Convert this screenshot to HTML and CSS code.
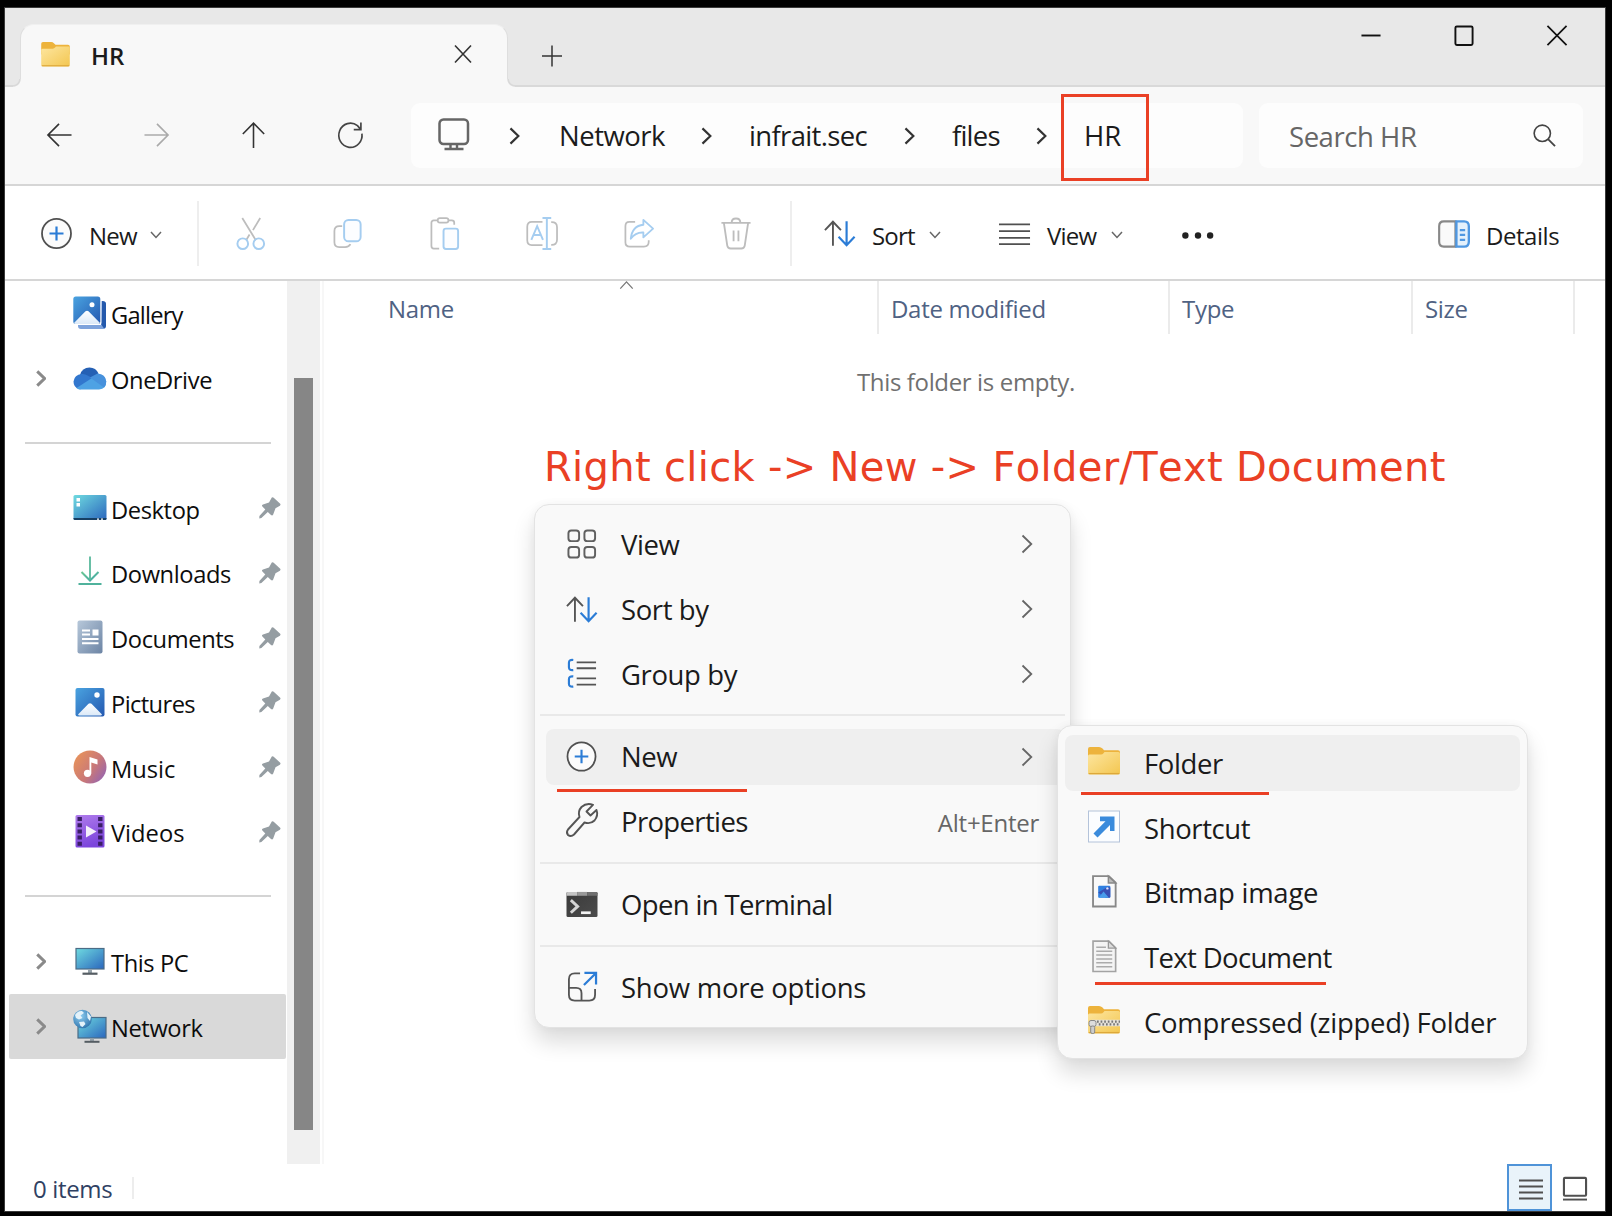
FILE: index.html
```html
<!DOCTYPE html>
<html lang="en">
<head>
<meta charset="utf-8">
<title>HR</title>
<link rel="stylesheet" href="styles.css">
</head>
<body>
<svg class="defs" width="0" height="0" aria-hidden="true">
  <defs>
    <linearGradient id="gFolder" x1="0" y1="0" x2="1" y2="1"><stop offset="0" stop-color="#fde6a0"/><stop offset="1" stop-color="#f3c650"/></linearGradient>
    <linearGradient id="gBlue" x1="0" y1="0" x2="1" y2="1"><stop offset="0" stop-color="#4aa3e0"/><stop offset="1" stop-color="#2458b0"/></linearGradient>
    <linearGradient id="gScreen" x1="0" y1="0" x2="1" y2="1"><stop offset="0" stop-color="#6fdbe0"/><stop offset="1" stop-color="#2b66bd"/></linearGradient>
    <linearGradient id="gDoc" x1="0" y1="0" x2="1" y2="1"><stop offset="0" stop-color="#b7c8da"/><stop offset="1" stop-color="#6c84a4"/></linearGradient>
    <linearGradient id="gMusic" x1="0" y1="0.2" x2="1" y2="0.9"><stop offset="0" stop-color="#e8935a"/><stop offset="0.55" stop-color="#c97878"/><stop offset="1" stop-color="#8f62b8"/></linearGradient>
    <linearGradient id="gVideo" x1="0" y1="0" x2="0.3" y2="1"><stop offset="0" stop-color="#b07cec"/><stop offset="1" stop-color="#7c46dc"/></linearGradient>
    <linearGradient id="gHill" x1="0" y1="0" x2="0" y2="1"><stop offset="0" stop-color="#fff"/><stop offset="1" stop-color="#dbe9f8"/></linearGradient>
    <linearGradient id="gDown" x1="0" y1="0" x2="1" y2="1"><stop offset="0" stop-color="#6cc794"/><stop offset="1" stop-color="#3fa6a6"/></linearGradient>
    <radialGradient id="gGlobe" cx="0.4" cy="0.35" r="0.7"><stop offset="0" stop-color="#8ecdf0"/><stop offset="1" stop-color="#2f74ad"/></radialGradient>
    <linearGradient id="gTerm" x1="0" y1="0" x2="1" y2="1"><stop offset="0" stop-color="#3a3a3a"/><stop offset="1" stop-color="#4c4c4c"/></linearGradient>
    <symbol id="folder" viewBox="0 0 32 28"><path d="M0 2Q0 0 2 0H11Q13 0 14.500 1.600L16 3.200H30Q32 3.200 32 5V14H0Z" fill="#edb33c"/><path d="M0 9Q0 7.500 1.500 7.500H13Q14.500 7.500 15.500 6.200L16.500 5H30.500Q32 5 32 6.500V25.500Q32 27.500 30 27.500H2Q0 27.500 0 25.500Z" fill="url(#gFolder)"/><path d="M0.600 26.600H31.400" stroke="#dda83a" stroke-width="1.300"/></symbol>
    <symbol id="pin" viewBox="0 0 22 22"><path d="M12.800 0.500Q13.800 -0.200 14.700 0.700L21.200 6.800Q22 7.800 20.900 8.700L16.500 11.200L14.200 17.500Q13.300 19.200 12 18L8.800 14.900L2.400 21L0.300 21.500L0.400 19L6.300 12.600L3.400 9.500Q2.300 8 4 7.400L10 5.600Z" fill="#959da2"/></symbol>
    <symbol id="chevR" viewBox="0 0 12 20"><path d="M1.500 1.500L10.300 10L1.500 18.500" fill="none" stroke="currentColor"/></symbol>
    <symbol id="chevD" viewBox="0 0 12 8"><path d="M1 1L6 6.500L11 1" fill="none" stroke="#666" stroke-width="1.500"/></symbol>
    <symbol id="plusO" viewBox="0 0 32 32"><ellipse cx="15.500" cy="16" rx="14.500" ry="14.700" fill="#fbfbfb" stroke="#505050" stroke-width="1.800"/><path d="M8.500 16H22.500M15.500 9V23" stroke="#2b7cd6" stroke-width="2.200"/></symbol>
    <symbol id="sortI" viewBox="0 0 34 28"><path d="M9.500 27V2M1 10.500L9.500 1.500L18 10.500" fill="none" stroke="#555" stroke-width="2"/><path d="M24 1V26M15.500 17.500L24 26.500L32.500 17.500" fill="none" stroke="#2b7cd6" stroke-width="2.300"/></symbol>
  </defs>
</svg>

<main class="window">
  <header class="titlebar">
    <div class="tab">
      <svg class="tab-folder"><use href="#folder"/></svg>
      <span class="tab-title">HR</span>
      <svg class="tab-close" viewBox="0 0 18 20"><path d="M1 1.500L17 18.500M17 1.500L1 18.500" stroke="#333" stroke-width="1.600"/></svg>
    </div>
    <svg class="tab-add" viewBox="0 0 20 22"><path d="M0 11H20M10 0.500V21.500" stroke="#333" stroke-width="1.500"/></svg>
    <div class="controls">
      <svg viewBox="0 0 22 22"><path d="M1 11H21" stroke="#111" stroke-width="2"/></svg>
      <svg viewBox="0 0 22 22"><rect x="2" y="1.500" width="18" height="19.500" rx="1.500" fill="none" stroke="#111" stroke-width="2"/></svg>
      <svg viewBox="0 0 22 22"><path d="M1 1L21 21M21 1L1 21" stroke="#111" stroke-width="1.800"/></svg>
    </div>
  </header>

  <nav class="navbar">
    <div class="nav-buttons">
      <svg viewBox="0 0 26 26"><path d="M25.500 13H1.500M12.500 1.500L1 13L12.500 24.500" fill="none" stroke="#333" stroke-width="1.700"/></svg>
      <svg viewBox="0 0 26 26"><path d="M0.500 13H24.500M13.500 1.500L25 13L13.500 24.500" fill="none" stroke="#aaa" stroke-width="1.700"/></svg>
      <svg viewBox="0 0 26 28"><path d="M13 28V1.500M1.500 13L13 1.200L24.500 13" fill="none" stroke="#333" stroke-width="1.700"/></svg>
      <svg viewBox="0 0 26 28"><path d="M25.300 12.500A12.500 13 0 1 1 20.500 4L24.200 8.200M24.200 0.500V8.300H16.500" fill="none" stroke="#444" stroke-width="1.800"/></svg>
    </div>
    <div class="address">
      <svg class="monitor" viewBox="0 0 32 32"><rect x="1.500" y="1.500" width="28.500" height="24.500" rx="4" fill="none" stroke="#666" stroke-width="2.500"/><path d="M12.500 26V30M19 26V30M6.500 31H25.500" stroke="#666" stroke-width="2.400" fill="none"/></svg>
      <svg class="crumb-chev"><use href="#chevR"/></svg><span>Network</span>
      <svg class="crumb-chev"><use href="#chevR"/></svg><span class="tight2">infrait.sec</span>
      <svg class="crumb-chev"><use href="#chevR"/></svg><span class="tight">files</span>
      <svg class="crumb-chev"><use href="#chevR"/></svg><span class="wide">HR</span>
      <i class="mark-box"></i>
    </div>
    <div class="search">
      <span>Search HR</span>
      <svg viewBox="0 0 24 24"><circle cx="9.700" cy="9.700" r="8.500" fill="none" stroke="#444" stroke-width="1.700"/><path d="M15.700 15.700L23 23" stroke="#444" stroke-width="1.900"/></svg>
    </div>
  </nav>

  <section class="toolbar">
    <svg class="ic"><use href="#plusO"/></svg><span>New</span><svg class="drop"><use href="#chevD"/></svg>
    <i class="sep"></i>
    <svg class="ic" viewBox="0 0 32 34"><path d="M7 1L21 24M25.500 1L18 13.500M14.500 18L11 24" fill="none" stroke="#bdbdbd" stroke-width="1.800"/><circle cx="7.500" cy="27.500" r="5.500" fill="none" stroke="#a5cdf0" stroke-width="2"/><circle cx="24" cy="27.500" r="5.500" fill="none" stroke="#a5cdf0" stroke-width="2"/></svg>
    <svg class="ic" viewBox="0 0 32 34"><path d="M10 9.500H7Q2 9.500 2 14.500V26Q2 31 7 31H13Q17 31 18.500 28" fill="none" stroke="#bdbdbd" stroke-width="1.800"/><rect x="12" y="3" width="17" height="22" rx="4.500" fill="#fcfdff" stroke="#a5cdf0" stroke-width="2"/></svg>
    <svg class="ic" viewBox="0 0 32 34"><path d="M8 3.500H4.500Q2 3.500 2 6V30Q2 32.700 4.500 32.700H10M20 3.500H23Q25.500 3.500 25.500 6V8" fill="none" stroke="#bdbdbd" stroke-width="1.800"/><rect x="8.500" y="1.200" width="11" height="4.500" rx="2.200" fill="none" stroke="#bdbdbd" stroke-width="1.800"/><rect x="14.500" y="12" width="15" height="21" rx="2.500" fill="#fcfdff" stroke="#a5cdf0" stroke-width="2"/></svg>
    <svg class="ic" viewBox="0 0 33 34"><path d="M17 5H6Q1.300 5 1.300 10V24Q1.300 29 6 29H17M26 5.200Q32 5 32 10.500V23.500Q32 29 26 28.800" fill="none" stroke="#bdbdbd" stroke-width="1.800"/><path d="M17 1H26M17 33H26M21.500 1V33M5.500 23.500L11.500 9.500L17.500 23.500M7.800 18.500H15.200" fill="none" stroke="#a5cdf0" stroke-width="2"/></svg>
    <svg class="ic" viewBox="0 0 32 34"><path d="M12 5H6Q2 5 2 9.500V26Q2 30.500 6.500 30.500H21Q26 30.500 26 25.500V24" fill="none" stroke="#bdbdbd" stroke-width="1.800"/><path d="M20.500 3L30.500 12L20.500 21V16Q12.500 15.500 7.500 22.500Q9 9 20.500 8Z" fill="none" stroke="#a5cdf0" stroke-width="1.900" stroke-linejoin="round"/></svg>
    <svg class="ic" viewBox="0 0 32 34"><path d="M1 6H31M3.500 6L7 29.500Q7.500 32.500 10.500 32.500H21.500Q24.500 32.500 25 29.500L28.500 6M11.500 6Q11.500 1.500 16 1.500T20.500 6M13.500 14V25M18.500 14V25" fill="none" stroke="#bdbdbd" stroke-width="1.900"/></svg>
    <i class="sep"></i>
    <svg class="ic"><use href="#sortI"/></svg><span>Sort</span><svg class="drop"><use href="#chevD"/></svg>
    <svg class="ic" viewBox="0 0 33 34"><path d="M0 7.500H32M0 14.500H32M0 21.500H32M0 28H32" stroke="#505050" stroke-width="1.800"/></svg><span>View</span><svg class="drop"><use href="#chevD"/></svg>
    <svg class="ic low" viewBox="0 0 33 34"><g fill="#222"><circle cx="3.500" cy="17" r="3.300"/><circle cx="16.500" cy="17" r="3.300"/><circle cx="29" cy="17" r="3.300"/></g></svg>
    <svg class="ic" viewBox="0 0 33 34"><path d="M18 4.500H6Q1.200 4.500 1.200 9.500V25.500Q1.200 30.500 6 30.500H18Z" fill="#fafafa" stroke="#888" stroke-width="2.200"/><path d="M19 4.500H27Q31.800 4.500 31.800 9.500V25.500Q31.800 30.500 27 30.500H19Z" fill="#e4f1fc" stroke="#4f98e2" stroke-width="2.400"/><path d="M22.500 13.500H28M22.500 18.500H28M22.500 23.500H28" stroke="#4f98e2" stroke-width="2.400"/></svg><span class="details">Details</span>
  </section>

  <div class="body">
    <aside class="sidebar">
      <div class="row"><svg class="pic" viewBox="0 0 34 34"><path d="M5 29H28V5Q33 5 33 8V30Q33 33 30 33H8Q5 33 5 30Z" fill="#7ea3dc"/><path d="M29 5Q33 5 33 8V30Q33 31.500 31 32.500L28 28Z" fill="#2459ac"/><rect x="0" y="0" width="28.500" height="29" rx="2.500" fill="#fff"/><rect x="0.300" y="0.500" width="27" height="27.500" rx="2.500" fill="url(#gBlue)"/><path d="M1 27L12.500 15.300Q14 14 15.500 15.300L27 27Q26 28.500 24.500 28H3Q1.500 28.300 1 27Z" fill="url(#gHill)"/><circle cx="19" cy="8.800" r="2.500" fill="#fff"/></svg><span class="tight">Gallery</span></div>
      <div class="row"><svg class="twist"><use href="#chevR"/></svg><svg class="pic" viewBox="0 0 34 34"><path d="M7 14Q9 6.500 16.500 6.500Q23 6.500 25.500 12.500L17 20Z" fill="#2560b4"/><path d="M6 28Q0.500 26.500 0.500 20.500Q1.500 13.500 8.500 13Q12 12.500 14.500 14.500L24 19.500L7 28.500Z" fill="#3277ce"/><path d="M24.500 13.500Q32.500 13.500 33.200 20.500Q33.500 28 26 28.500H8Q5 28.500 3.500 27Z" fill="#4ea2e4"/><path d="M17 16.500L24.500 12.500Q32.500 13 33.200 20.500Q33 24.500 31 26.500Z" fill="#4791dc"/></svg><span>OneDrive</span></div>
      <div class="row line"></div>
      <div class="row"><svg class="pic" viewBox="0 0 34 34"><rect x="0.500" y="4" width="33" height="25" rx="1.500" fill="url(#gScreen)"/><path d="M0.500 27H33.500V27.500Q33.500 29 32 29H2Q0.500 29 0.500 27.500Z" fill="#173f63"/><path d="M3.500 7H7V10.500H3.500ZM3.500 12H7V15.500H3.500ZM24 27.400H26V28.800H24ZM28 27.400H30V28.800H28Z" fill="#fff"/></svg><span>Desktop</span><svg class="pin"><use href="#pin"/></svg></div>
      <div class="row"><svg class="pic" viewBox="0 0 34 34"><path d="M8.500 17L17 25.500L25.500 17" fill="none" stroke="url(#gDown)" stroke-width="2"/><path d="M16.100 1.500H17.900V25H16.100Z" fill="#58b89c"/><rect x="5.500" y="28" width="23" height="2" fill="#4fb29c"/></svg><span>Downloads</span><svg class="pin"><use href="#pin"/></svg></div>
      <div class="row"><svg class="pic" viewBox="0 0 34 34"><rect x="4.500" y="0.500" width="25" height="33" rx="2" fill="url(#gDoc)"/><path d="M9 10.500H17M9 14.500H17M9 19H25.500M9 23.300H25.500" stroke="#fff" stroke-width="2"/><rect x="19.500" y="9.500" width="6" height="6" fill="#fff"/></svg><span>Documents</span><svg class="pin"><use href="#pin"/></svg></div>
      <div class="row"><svg class="pic" viewBox="0 0 34 34"><rect x="2.500" y="3" width="29" height="28.500" rx="2" fill="url(#gBlue)"/><path d="M5 29.500L15.500 18.800Q17 17.500 18.500 18.800L29 29.500Q28.500 30.800 27 30.500H7Q5.500 30.800 5 29.500Z" fill="url(#gHill)"/><circle cx="24" cy="10" r="2.700" fill="#fff"/></svg><span class="tight3">Pictures</span><svg class="pin"><use href="#pin"/></svg></div>
      <div class="row"><svg class="pic" viewBox="0 0 34 34"><circle cx="17" cy="17" r="16.500" fill="url(#gMusic)"/><circle cx="14.500" cy="23.300" r="3.600" fill="#fff"/><path d="M16.500 7L24.500 9.500V14.500L18.300 12.500V23.500H16.500Z" fill="#fff"/></svg><span class="wide">Music</span><svg class="pin"><use href="#pin"/></svg></div>
      <div class="row"><svg class="pic" viewBox="0 0 34 34"><rect x="2.500" y="1" width="29" height="32.500" rx="1.500" fill="url(#gVideo)"/><path d="M6.700 3V33M27.300 3V33" stroke="#3a1f66" stroke-width="4.400" stroke-dasharray="4 2.200"/><path d="M13 11.500V23.500L23.500 17.500Z" fill="#f4f0fa"/></svg><span class="wide">Videos</span><svg class="pin"><use href="#pin"/></svg></div>
      <div class="row line"></div>
      <div class="row"><svg class="twist"><use href="#chevR"/></svg><svg class="pic" viewBox="0 0 34 34"><rect x="3" y="4.500" width="28" height="20.500" fill="url(#gScreen)" stroke="#4b6c86" stroke-width="1.200"/><path d="M15 25.500H19V29H15Z" fill="#97a3ab"/><path d="M9.500 29.700H24.500" stroke="#555d63" stroke-width="2.200"/></svg><span>This PC</span></div>
      <div class="row selected"><svg class="twist"><use href="#chevR"/></svg><svg class="pic" viewBox="0 0 34 34"><rect x="5" y="8.500" width="28" height="20.500" fill="url(#gScreen)" stroke="#4b6c86" stroke-width="1.200"/><path d="M17 29.500H21V32H17Z" fill="#97a3ab"/><path d="M11.500 32.800H26.500" stroke="#555d63" stroke-width="2"/><circle cx="9.500" cy="10" r="9.300" fill="url(#gGlobe)"/><path d="M2 6Q5 1.500 9 2L11 4L7.500 6.500L9.500 9L6 10.500L3 9ZM14 3L18 7.500L17 12L14.500 9ZM6 13L11 12.500L12.500 15L9.500 18L7.500 17Z" fill="#e3f2fa"/></svg><span>Network</span></div>
    </aside>
    <div class="scrollbar"><div class="thumb"></div></div>
    <section class="content">
      <div class="columns">
        <div>Name<svg class="sort-up" viewBox="0 0 16 9"><path d="M1 8.500L8 1L15 8.500" fill="none" stroke="#777" stroke-width="1.400"/></svg></div><div>Date modified</div><div>Type</div><div>Size</div>
      </div>
      <p class="empty">This folder is empty.</p>
      <p class="note">Right click -&gt; New -&gt; Folder/Text Document</p>
    </section>
  </div>

  <footer class="status">
    <span>0 items</span><i></i>
    <div class="mode active"><svg viewBox="0 0 26 24"><path d="M1 3H25M1 9H25M1 15H25M1 21H25" stroke="#505050" stroke-width="2"/></svg></div>
    <div class="mode"><svg viewBox="0 0 26 26"><rect x="1.500" y="2" width="23" height="18.500" rx="1" fill="none" stroke="#505050" stroke-width="2.200"/><path d="M0.500 24.500H25.500" stroke="#505050" stroke-width="2"/></svg></div>
  </footer>
</main>

<div class="menu context">
  <div class="item"><svg class="mi" viewBox="0 0 32 32"><g fill="none" stroke="#606060" stroke-width="2"><rect x="2" y="1.500" width="11" height="11" rx="3"/><rect x="18.500" y="1.500" width="11" height="11" rx="3"/><rect x="2" y="18.500" width="11" height="11" rx="3"/><rect x="18.500" y="18.500" width="11" height="11" rx="3"/></g></svg><span>View</span><svg class="sub"><use href="#chevR"/></svg></div>
  <div class="item"><svg class="mi"><use href="#sortI"/></svg><span>Sort by</span><svg class="sub"><use href="#chevR"/></svg></div>
  <div class="item"><svg class="mi" viewBox="0 0 32 32"><path d="M7 2Q2.500 1.500 2.500 5V9.500Q2.500 13 7 12.500M7 19Q2.500 18.500 2.500 22V26.500Q2.500 30 7 29.500" fill="none" stroke="#2b7cd6" stroke-width="2.200"/><path d="M10.500 4.500H30.500M10.500 10.500H30.500M10.500 21H30.500M10.500 27.500H30.500" stroke="#555" stroke-width="2"/></svg><span>Group by</span><svg class="sub"><use href="#chevR"/></svg></div>
  <hr>
  <div class="item hot"><svg class="mi"><use href="#plusO"/></svg><span>New</span><svg class="sub"><use href="#chevR"/></svg><i class="mark m-new"></i></div>
  <div class="item"><svg class="mi tall" viewBox="0 0 32 34"><path d="M27 1.800Q20.500 -0.500 15.500 4Q11.500 8.500 13.500 14L2 26.500Q-0.200 29.500 2 32Q5 34.200 8 31.500L18.500 19.500Q24.500 21.500 28.500 17.500Q32.500 12.500 30.500 7L24.500 12.500L20.500 8.500Z" fill="none" stroke="#555" stroke-width="1.900" stroke-linejoin="round"/></svg><span class="tight2">Properties</span><kbd>Alt+Enter</kbd></div>
  <hr>
  <div class="item"><svg class="mi" viewBox="0 0 32 32"><rect x="0" y="3" width="32" height="26" rx="1.500" fill="url(#gTerm)"/><path d="M0 7V4.500Q0 3 1.500 3H11V7Z" fill="#c4c4c4"/><path d="M11 3H21.500V7H11Z" fill="#999"/><path d="M21.500 3H30.500Q32 3 32 4.500V7H21.500Z" fill="#707070"/><path d="M4.500 11.500L11.500 18L4.500 24.500" fill="none" stroke="#d6d6d6" stroke-width="3"/><path d="M15 24.500H25" stroke="#f4f4f4" stroke-width="2.800"/></svg><span class="tight2">Open in Terminal</span></div>
  <hr>
  <div class="item"><svg class="mi" viewBox="0 0 32 32"><path d="M14 2.500H8.500Q2.500 2.500 2.500 8.500V24.500Q2.500 30.500 8.500 30.500H23.500Q29.500 30.500 29.500 24.500V18.500M2.500 17.500H10Q15.500 17.500 15.500 23V30.500" fill="none" stroke="#555" stroke-width="1.900"/><path d="M18.500 2H30.500V14M30 2.500L18 14.500" fill="none" stroke="#2b7cd6" stroke-width="2.300"/></svg><span class="loose">Show more options</span></div>
</div>

<div class="menu submenu">
  <div class="item hot"><svg class="mi fold"><use href="#folder"/></svg><span>Folder</span><i class="mark m-folder"></i></div>
  <div class="item"><svg class="mi" viewBox="0 0 32 32"><rect x="0.500" y="0.500" width="31" height="31" fill="#fbfdff" stroke="#b4c3da"/><path d="M12 6H26.500V20.500H22V14.500L9.500 27L5.500 23L17.500 10.800H12Z" fill="#3a8bdc"/></svg><span>Shortcut</span></div>
  <div class="item"><svg class="mi" viewBox="0 0 32 34"><path d="M4.700 1.200H21L28 8V32.500H4.700Z" fill="#f9f9f9" stroke="#888" stroke-width="1.900"/><path d="M20.500 1.200V8.300H28Z" fill="#bbb" stroke="#888" stroke-width="1.500"/><rect x="10" y="11" width="12.500" height="12.500" rx="1" fill="#2f7fe0"/><path d="M10 18L20 12L22.500 13V22.500Q22.500 23.500 21.500 23.500H18Z" fill="#3a50b4"/><path d="M10.500 23.500L15.500 17L21 23.500Z" fill="#4a9cea"/><circle cx="19.500" cy="13.800" r="1.200" fill="#dce8ff"/></svg><span class="loose">Bitmap image</span></div>
  <div class="item"><svg class="mi" viewBox="0 0 32 34"><path d="M4.700 1.200H21L28 8V32.500H4.700Z" fill="#f4f4f4" stroke="#a3a3a3" stroke-width="1.700"/><path d="M20.500 1.200V8.300H28Z" fill="#ddd" stroke="#999" stroke-width="1.300"/><path d="M8 7.500H18M8 11.500H24.500M8 15.500H24.500M8 19.500H24.500M8 23.500H24.500M8 27.500H24.500" stroke="#ababab" stroke-width="1.500"/></svg><span class="tight2">Text Document</span><i class="mark m-text"></i></div>
  <div class="item"><svg class="mi fold" viewBox="0 0 32 28"><use href="#folder" width="32" height="28"/><path d="M4 17H32" stroke="#e7e3da" stroke-width="6.500"/><path d="M9 15.700H32" stroke="#777" stroke-width="2.200" stroke-dasharray="1.700 1.900"/><path d="M10.800 18.300H32" stroke="#777" stroke-width="2.200" stroke-dasharray="1.700 1.900"/><rect x="1" y="14.500" width="7" height="6" rx="2" fill="#ddd" stroke="#888"/><rect x="2.700" y="20" width="4" height="7.500" rx="1.500" fill="#ccc" stroke="#888"/></svg><span class="loose">Compressed (zipped) Folder</span></div>
</div>
</body>
</html>
```
FILE: styles.css
```css
* { box-sizing: border-box; }
body { margin: 0; height: 1216px; overflow: hidden; padding: 8px 7px 5px 5px; background: #000; font-family: "Open Sans", "Noto Sans", sans-serif; color: #1b1b1b; position: relative; }
svg { display: block; overflow: visible; }
.defs { position: absolute; }
.window { height: 1203px; background: #fff; box-shadow: 0 0 0 1px #3a3a3a; display: flex; flex-direction: column; }

/* Title bar */
.titlebar { height: 79px; flex: none; background: #e8e8e8; border-bottom: 2px solid #d9d9d9; display: flex; padding-left: 15px; }
.tab { position: relative; width: 488px; height: 63px; margin: 16px 0 -2px; padding: 0 35px 0 20px; background: #f8f8f8; border: 1px solid #dedede; border-bottom: 0; border-top-color: #f0f0f0; border-radius: 14px 14px 0 0; display: flex; align-items: center; }
.tab::before, .tab::after { content: ""; position: absolute; bottom: 0; width: 8px; height: 8px; }
.tab::before { left: -8px; background: radial-gradient(circle at 0 0, #e8e8e8 5.5px, #d9d9d9 6.5px 7.2px, #f8f8f8 8.2px); }
.tab::after { right: -8px; background: radial-gradient(circle at 100% 0, #e8e8e8 5.5px, #d9d9d9 6.5px 7.2px, #f8f8f8 8.2px); }
.tab-folder { width: 29px; height: 25px; margin-bottom: 4px; }
.tab-title { margin-left: 21px; font-size: 24px; line-height: 30px; font-weight: 600; }
.tab-close { width: 18px; height: 20px; margin: 0 0 5px auto; }
.tab-add { width: 20px; height: 22px; margin: 37px 0 0 34px; }
.controls { margin-left: auto; display: flex; gap: 71px; padding: 17px 37px 0 0; }
.controls svg { width: 22px; height: 21px; }

/* Navigation bar */
.navbar { height: 99px; flex: none; background: #f8f8f8; border-bottom: 2px solid #d6d6d6; display: flex; align-items: center; padding: 0 0 0 6px; }
.nav-buttons { width: 388px; display: grid; grid-template-columns: repeat(4, 97px); place-items: center; }
.nav-buttons svg { width: 25px; height: 26px; margin: 0 1px 1px 0; }
.address { position: relative; width: 832px; height: 65px; margin-left: 12px; padding-left: 27px; background: #fdfdfd; border-radius: 9px; display: grid; grid-template-columns: 71px 50px 142px 48px 155px 48px 84px 48px 1fr; align-items: center; font-size: 27.5px; line-height: 40px; letter-spacing: -0.5px; }
.monitor { width: 32px; height: 32px; margin-bottom: 3px; }
.crumb-chev { width: 11px; height: 18px; stroke-width: 2.4px; color: #333; }
.mark-box { position: absolute; left: 650px; top: -9px; width: 88px; height: 87px; border: 3px solid #ea4025; }
.search { width: 324px; height: 65px; margin-left: 16px; padding: 0 27px 0 30px; background: #fdfdfd; border-radius: 9px; display: flex; justify-content: space-between; align-items: center; font-size: 27.5px; line-height: 42px; letter-spacing: -0.45px; color: #666; }
.search span { padding-top: 2px; }
.search svg { width: 23px; height: 23px; }
.tight { letter-spacing: -0.8px; }
.tight2 { letter-spacing: -0.65px; }
.tight3 { letter-spacing: -0.6px; }
.loose { letter-spacing: -0.25px; }
.wide { letter-spacing: 0; }

/* Command bar */
.toolbar { height: 95px; flex: none; background: #fff; border-bottom: 2px solid #d6d6d6; padding-left: 36px; display: grid; align-items: center; grid-template-columns: 48px 61px 47px 38px repeat(5, 97px) 70px 34px 48px 57px 70px 48px 64px 71px 256px 48px 1fr; font-size: 24px; line-height: 30px; letter-spacing: -0.8px; }
.toolbar span { padding-top: 6px; }
.toolbar .details { letter-spacing: -0.45px; }
.ic { width: 32px; height: 33px; margin-top: 2px; }
.low { margin-top: 5px; }
.drop { width: 12px; height: 8px; margin-top: 4px; }
.sep { width: 2px; height: 65px; margin-top: 2px; background: #eee; }

/* Main area */
.body { height: 883px; flex: none; display: grid; grid-template-columns: 282px 33px 1fr; }
.sidebar { display: grid; grid-auto-rows: 64.75px; align-content: start; padding-top: 1px; font-size: 23.7px; letter-spacing: -0.4px; color: #0d0d0d; }
.row { display: grid; grid-template-columns: 37px 36px 150px 21px; align-items: center; padding-left: 27px; margin-left: 4px; width: 277px; line-height: 32px; }
.row .twist { grid-column: 1; }
.row .pic { grid-column: 2; grid-row: 1; width: 34px; height: 34px; margin-bottom: 2px; }
.row span { grid-column: 3; grid-row: 1; padding: 2px 0 0 2px; }
.row .pin { grid-column: 4; grid-row: 1; width: 22px; height: 22px; margin-bottom: 1px; }
.twist { width: 10px; height: 17px; margin-bottom: 1px; color: #8a8a8a; stroke-width: 3.6px; }
.line::before { content: ""; grid-column: 1 / -1; width: 246px; height: 2px; margin: -2px 0 0 -11px; background: #d4d4d4; }
.selected { background: #d9d9d9; border-radius: 2px; }
.scrollbar { background: #f0f0f0; padding: 97px 7px 0; }
.thumb { width: 19px; height: 752px; background: #868686; }
.content { position: relative; margin-left: 2px; border-left: 2px solid #f7f7f7; }
.columns { display: grid; grid-template-columns: 555px 291px 243px 162px; font-size: 24px; line-height: 55px; letter-spacing: -0.3px; color: #4f6283; }
.columns div { position: relative; height: 53px; border-right: 2px solid #ebebeb; padding-left: 12px; }
.columns div:first-child { padding-left: 64px; }
.sort-up { position: absolute; left: 295px; top: 0; width: 15px; height: 8px; }
.empty { margin: 32px 0 0; padding-left: 533px; font-size: 24px; line-height: 32px; letter-spacing: -0.36px; color: #707070; }
.note { position: absolute; left: 220px; top: 162px; margin: 0; font-family: "DejaVu Sans", sans-serif; font-size: 40px; font-kerning: none; line-height: 48px; letter-spacing: 0.32px; white-space: nowrap; color: #ea4025; }

/* Status bar */
.status { height: 47px; flex: none; display: flex; align-items: center; padding: 0 8px 0 28px; font-size: 24px; letter-spacing: -0.35px; color: #2f4163; }
.status span { line-height: 32px; padding-top: 3px; }
.status i { width: 2px; height: 22px; background: #ededed; margin: 0 auto 0 20px; }
.mode { width: 45px; height: 47px; display: grid; place-items: center; padding: 4px 0 0 1px; }
.active { padding-left: 3px; }
.mode svg { width: 26px; height: 25px; }
.mode:last-child svg { margin-bottom: 3px; }
.active { background: #e9f3fa; border: 2px solid #4f93d8; }

/* Menus */
.menu { position: absolute; background: #f9f9f9; border: 1.5px solid #e3e3e3; border-radius: 15px; box-shadow: 0 14px 22px rgba(0,0,0,.14), 0 0 10px rgba(0,0,0,.04); font-size: 27.5px; line-height: 40px; letter-spacing: -0.4px; }
.context { left: 534px; top: 504px; width: 537px; height: 524px; padding: 7px 5px 0; }
.submenu { left: 1057px; top: 725px; width: 471px; height: 334px; padding: 4.5px 7px 0; }
.item { position: relative; height: 64.75px; display: flex; align-items: center; padding-left: 26px; }
.submenu .item { padding-left: 23px; }
.item.hot::before { content: ""; position: absolute; inset: 4.5px 0 4.5px 6px; background: #efefef; border-radius: 8px; }
.submenu .hot::before { left: 0; }
.item > * { position: relative; }
.mi { width: 32px; height: 31px; }
.hot .mi { margin-bottom: 1px; }
.tall { height: 34px; margin-bottom: 3px; }
.submenu .mi { height: 33px; margin-bottom: 2px; }
.submenu .fold { height: 28px; margin-bottom: 4px; }
.item span { margin-left: 23px; padding-top: 2px; white-space: nowrap; }
.submenu .item span { margin-left: 24px; }
.context .hot span { padding-top: 1px; }
.sub { width: 12px; height: 20px; margin: 0 32px 0 auto; color: #666; stroke-width: 1.8px; }
kbd { margin: 3px 26px 0 auto; font: 24px/32px "Open Sans", sans-serif; letter-spacing: -0.25px; color: #666; }
.menu hr { margin: 8px 0; height: 2px; border: 0; background: #e9e9e9; }
.item > .mark { position: absolute; height: 3px; background: #ea4025; }
.item > .m-new { left: 17px; top: 65px; width: 190px; }
.item > .m-folder { left: 16px; top: 61px; width: 188px; }
.item > .m-text { left: 30px; top: 57px; width: 231px; }
```
